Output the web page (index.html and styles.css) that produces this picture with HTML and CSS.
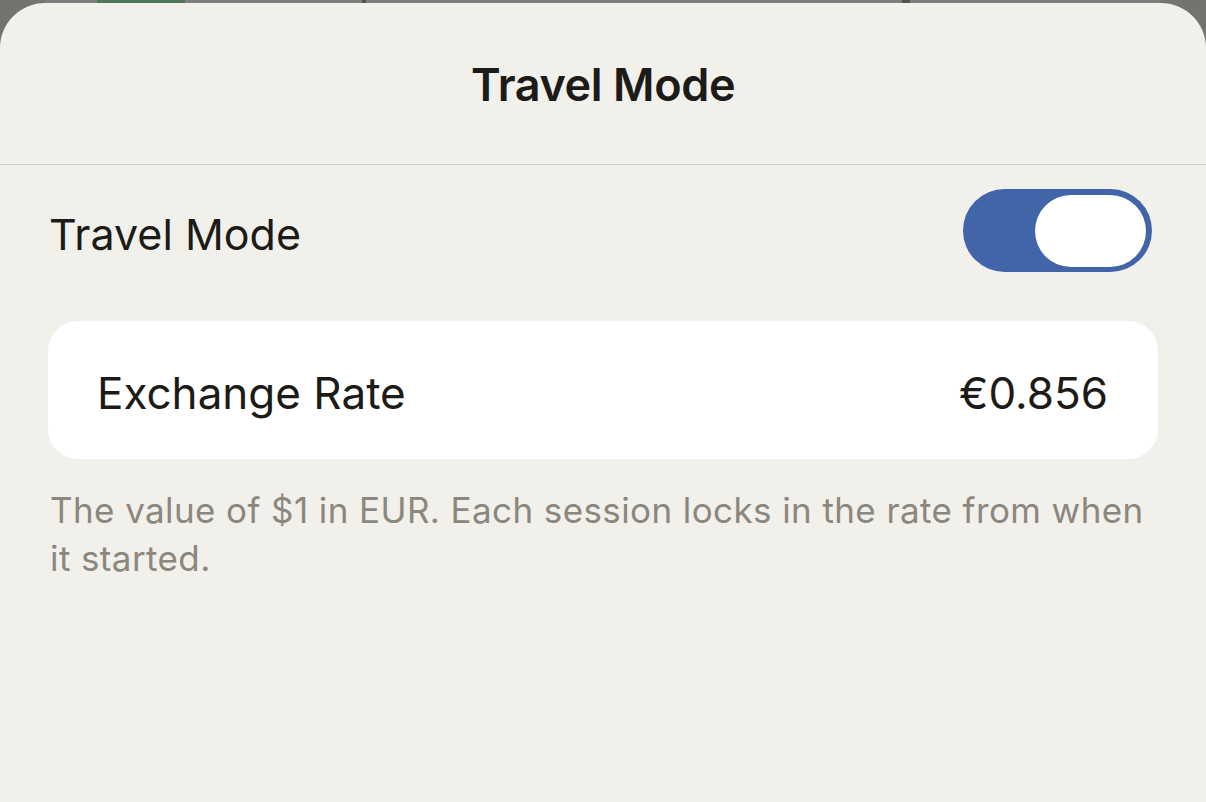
FILE: index.html
```html
<!DOCTYPE html>
<html>
<head>
<meta charset="utf-8">
<link rel="stylesheet" href="styles.css">
</head>
<body>
<div class="peek">
  <span class="peek-tab"></span>
  <span class="peek-dot peek-dot-a"></span>
  <span class="peek-dot peek-dot-b"></span>
</div>
<div class="sheet">
  <header class="sheet-header">
    <h1 class="sheet-title">Travel Mode</h1>
  </header>
  <div class="content">
    <div class="toggle-row">
      <span class="row-label">Travel Mode</span>
      <span class="toggle"><span class="toggle-knob"></span></span>
    </div>
    <div class="card">
      <span class="card-label">Exchange Rate</span>
      <span class="card-value">€0.856</span>
    </div>
    <p class="footnote">The value of $1 in EUR. Each session locks in the rate from when it started.</p>
  </div>
</div>
</body>
</html>
```

FILE: styles.css
```css
html, body {
  margin: 0;
  padding: 0;
}
body {
  width: 1206px;
  height: 802px;
  overflow: hidden;
  background: #74736e;
  font-family: Inter, "Noto Sans", sans-serif;
  display: flex;
  flex-direction: column;
}
.peek {
  height: 3px;
  margin: 0 45px;
  background: #7f7f7f;
  display: flex;
  flex-shrink: 0;
}
.peek-tab {
  margin-left: 52px;
  width: 88px;
  background: #4e7758;
}
.peek-dot {
  width: 4px;
  background: #55554f;
}
.peek-dot-a { margin-left: 177px; }
.peek-dot-b { margin-left: 536px; width: 8px; }
.sheet {
  flex: 1;
  background: #f1f0eb;
  border-radius: 45px 45px 0 0;
  display: flex;
  flex-direction: column;
}
.sheet-header {
  height: 162px;
  border-bottom: 1px solid #cccbc6;
  display: flex;
  align-items: center;
  justify-content: center;
  box-sizing: border-box;
  padding-top: 2px;
}
.sheet-title {
  margin: 0;
  font-size: 45px;
  font-weight: 600;
  color: #1c1b17;
  letter-spacing: -0.4px;
}
.content {
  padding: 0 48px;
}
.toggle-row {
  margin-top: 24px;
  height: 83px;
  display: flex;
  align-items: center;
  justify-content: space-between;
  padding: 0 6px 0 1px;
}
.row-label {
  font-size: 43px;
  color: #1c1b17;
  padding-top: 6px;
}
.toggle {
  width: 189px;
  height: 83px;
  border-radius: 42px;
  background: #4264a8;
  display: flex;
  align-items: center;
  justify-content: flex-end;
  padding-right: 6px;
  box-sizing: border-box;
}
.toggle-knob {
  width: 111px;
  height: 72px;
  border-radius: 36px;
  background: #ffffff;
}
.card {
  margin-top: 49px;
  height: 138px;
  box-sizing: border-box;
  padding: 6px 50px 0 49px;
  background: #ffffff;
  border-radius: 30px;
  display: flex;
  align-items: center;
  justify-content: space-between;
}
.card-label, .card-value {
  font-size: 44px;
  color: #1c1b17;
}
.footnote {
  margin: 27px 0 0;
  padding: 0 2px;
  font-size: 35px;
  line-height: 48px;
  letter-spacing: 0.4px;
  color: #8b877d;
}
```
